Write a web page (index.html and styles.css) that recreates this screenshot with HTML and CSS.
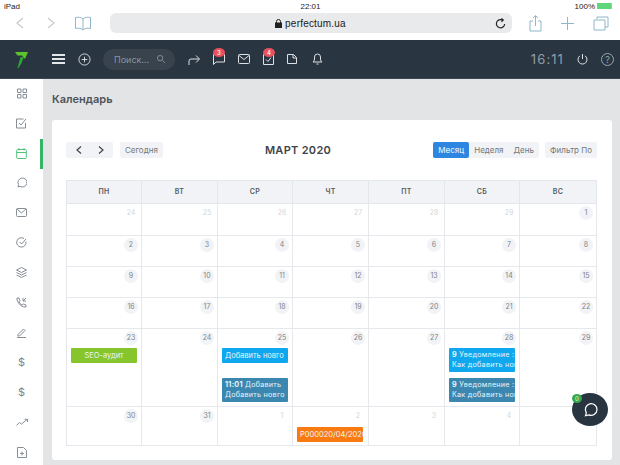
FILE: index.html
```html
<!DOCTYPE html>
<html lang="ru">
<head>
    <meta charset="UTF-8">
    <title>Календарь</title>
    <link rel="stylesheet" href="styles.css">
</head>
<body>
    <div class="status">
        <span>iPad</span>
        <span class="status-time">22:01</span>
        <span class="status-right">100% <i class="battery"></i></span>
    </div>
    <div class="safari">
        <div class="safari-left">
            <svg width="12" height="14" viewBox="0 0 12 14" class="muted"><path d="M9 2 3 7l6 5"/></svg>
            <svg width="12" height="14" viewBox="0 0 12 14" class="muted"><path d="m3 2 6 5-6 5"/></svg>
            <svg width="18" height="15" viewBox="0 0 18 15" class="tint"><path d="M9 3C7 1 4 1 1.500 1.500v11C4 12 7 12 9 14c2-2 5-2 7.500-1.500v-11C14 1 11 1 9 3zv11"/></svg>
        </div>
        <div class="address">
            <span class="address-text"><svg width="7" height="9" viewBox="0 0 7 9" class="lock"><path d="M1.500 4V2.500a2 2 0 0 1 4 0V4"/><rect x="0.500" y="4" width="6" height="4.500"/></svg> perfectum.ua</span>
            <svg width="11" height="11" viewBox="0 0 12 12" class="reload"><path d="M10.500 6.500A4.500 4.500 0 1 1 8 2.200M7 .5l2 1.800L7 4.200"/></svg>
        </div>
        <div class="safari-right">
            <svg width="13" height="17" viewBox="0 0 13 17" class="tint"><path d="M4 6H1v10h11V6H9M6.500 11V1M4 3l2.500-2.500L9 3"/></svg>
            <svg width="15" height="15" viewBox="0 0 15 15" class="tint"><path d="M7.500 1v13M1 7.500h13"/></svg>
            <svg width="16" height="15" viewBox="0 0 16 15" class="tint"><path d="M4 3V1h11v10h-3M1 4h11v10H1z"/></svg>
        </div>
    </div>

    <header class="topbar">
        <svg class="logo" width="14" height="17" viewBox="0 0 14 17"><path d="M1 1h13l-3 7-3-3.500H3.500z" fill="#5cc42b"/><path d="M6.500 6H10l-2.500 6L4.500 17H3.500z" fill="#2fa536"/></svg>
        <div class="burger"><i></i><i></i><i></i></div>
        <svg width="13" height="13" viewBox="0 0 14 14" class="top-icon"><circle cx="7" cy="7" r="6"/><path d="M7 4v6M4 7h6"/></svg>
        <div class="search">
            <span>Поиск...</span>
            <svg width="8" height="8" viewBox="0 0 9 9" class="search-icon"><circle cx="3.500" cy="3.500" r="3"/><path d="m6 6 3 3"/></svg>
        </div>
        <svg width="12" height="11" viewBox="0 0 12 11" class="top-icon"><path d="M1 11V7q0-2 2-2h8M8 1.500 11.500 5 8 8.500"/></svg>
        <div class="notify">
            <svg width="12" height="11" viewBox="0 0 12 11" class="top-icon"><path d="M.5.500h11v7.500H3L.5 10.500z"/></svg>
            <b class="badge">3</b>
        </div>
        <svg width="12" height="10" viewBox="0 0 12 10" class="top-icon"><rect x="0.500" y="0.500" width="11" height="9" rx="1"/><path d="m1 1.500 5 4 5-4"/></svg>
        <div class="notify">
            <svg width="11" height="11" viewBox="0 0 11 11" class="top-icon"><path d="M.5.500h10v10H.5zM3 5.500l2 2 3-4"/></svg>
            <b class="badge">4</b>
        </div>
        <svg width="10" height="10" viewBox="0 0 10 10" class="top-icon file-icon"><path d="M.5.500h6l3 3v6H.5zM6 .5v3.500h3.500"/></svg>
        <svg width="11" height="12" viewBox="0 0 11 12" class="top-icon"><path d="M1 9q1.500-1 1.500-3V4a3 3 0 0 1 6 0v2Q8.500 8 10 9zM4.500 11h2"/></svg>
        <div class="top-right">
            <span class="clock">16:11</span>
            <svg width="11" height="12" viewBox="0 0 11 12" class="top-icon"><path d="M5.500 1v5M3 2.800a4.500 4.500 0 1 0 5 0"/></svg>
            <span class="help">?</span>
        </div>
    </header>

    <div class="app">
        <nav class="sidebar">
            <svg width="10" height="10" viewBox="0 0 10 10"><path d="M.5.500h3.500v3.500H.5zM6 .5h3.500v3.500H6zM.5 6h3.500v3.500H.5zM6 6h3.500v3.500H6z"/></svg>
            <svg width="11" height="11" viewBox="0 0 11 11"><path d="M9.500 5v5H.5V1h7M3 5l2 2 5-6"/></svg>
            <div class="nav-active"><svg width="11" height="11" viewBox="0 0 11 11"><rect x="0.700" y="1.500" width="9.600" height="9" rx="1"/><path d="M.7 4.500h9.600M3 0v2.500M8 0v2.500"/></svg></div>
            <svg width="11" height="11" viewBox="0 0 11 11"><path d="M2 10l.5-2.300A4.500 4.500 0 1 1 4 9.300z"/></svg>
            <svg width="11" height="9" viewBox="0 0 11 9"><rect x="0.500" y="0.500" width="10" height="8" rx="1"/><path d="m1 1 4.500 4L10 1"/></svg>
            <svg width="11" height="11" viewBox="0 0 11 11"><path d="M10 4.500A4.700 4.700 0 1 1 8 1.500M3.500 5l2 2L10 2"/></svg>
            <svg width="11" height="11" viewBox="0 0 11 11"><path d="m5.500.5 5 2.500-5 2.500-5-2.500zM.5 5.500l5 2.500 5-2.500M.5 8l5 2.500L10.500 8"/></svg>
            <svg width="11" height="11" viewBox="0 0 11 11"><path d="M1 1h2l1 2.500L3 5q1 2 3 3l1.500-1L10 8v2Q4 10.500 1 3zM7 1v3h3M7 4l3-3"/></svg>
            <svg width="11" height="11" viewBox="0 0 11 11"><path d="M2 7.500 7.500 2 9 3.500 3.500 9H2zM1 10.500h9"/></svg>
            <span class="nav-dollar">$</span>
            <span class="nav-dollar">$</span>
            <svg width="12" height="8" viewBox="0 0 12 8"><path d="m.5 7 3-3 2 1.500L11 1M8.500.8H11.500V3.500"/></svg>
            <svg width="10" height="11" viewBox="0 0 10 11"><path d="M.5.500h6l3 3v7H.5zM5 4.500v4M3 6.500h4"/></svg>
        </nav>

        <main class="content">
            <h1>Календарь</h1>
            <section class="card">
                <div class="toolbar">
                    <div class="toolbar-left">
                        <div class="btn arrows">
                            <svg width="6" height="8" viewBox="0 0 6 8"><path d="M5 .5 1 4l4 3.500"/></svg>
                            <svg width="6" height="8" viewBox="0 0 6 8"><path d="m1 .5 4 3.500-4 3.500"/></svg>
                        </div>
                        <div class="btn">Сегодня</div>
                    </div>
                    <h2>МАРТ 2020</h2>
                    <div class="toolbar-right">
                        <div class="views">
                            <span class="view-on">Месяц</span>
                            <span>Неделя</span>
                            <span>День</span>
                        </div>
                        <div class="btn">Фильтр По</div>
                    </div>
                </div>

                <div class="calendar">
                    <div class="head">ПН</div><div class="head">ВТ</div><div class="head">СР</div><div class="head">ЧТ</div><div class="head">ПТ</div><div class="head">СБ</div><div class="head">ВС</div>

                    <div class="cell"><span class="day off">24</span></div>
                    <div class="cell"><span class="day off">25</span></div>
                    <div class="cell"><span class="day off">26</span></div>
                    <div class="cell"><span class="day off">27</span></div>
                    <div class="cell"><span class="day off">28</span></div>
                    <div class="cell"><span class="day off">29</span></div>
                    <div class="cell"><span class="day">1</span></div>

                    <div class="cell"><span class="day">2</span></div>
                    <div class="cell"><span class="day">3</span></div>
                    <div class="cell"><span class="day">4</span></div>
                    <div class="cell"><span class="day">5</span></div>
                    <div class="cell"><span class="day">6</span></div>
                    <div class="cell"><span class="day">7</span></div>
                    <div class="cell"><span class="day">8</span></div>

                    <div class="cell"><span class="day">9</span></div>
                    <div class="cell"><span class="day">10</span></div>
                    <div class="cell"><span class="day">11</span></div>
                    <div class="cell"><span class="day">12</span></div>
                    <div class="cell"><span class="day">13</span></div>
                    <div class="cell"><span class="day">14</span></div>
                    <div class="cell"><span class="day">15</span></div>

                    <div class="cell"><span class="day">16</span></div>
                    <div class="cell"><span class="day">17</span></div>
                    <div class="cell"><span class="day">18</span></div>
                    <div class="cell"><span class="day">19</span></div>
                    <div class="cell"><span class="day">20</span></div>
                    <div class="cell"><span class="day">21</span></div>
                    <div class="cell"><span class="day">22</span></div>

                    <div class="cell"><span class="day">23</span><div class="event green">SEO-аудит</div></div>
                    <div class="cell"><span class="day">24</span></div>
                    <div class="cell">
                        <span class="day">25</span>
                        <div class="event blue left">Добавить новго</div>
                        <div class="event teal two low"><b>11:01</b> Добавить<br>Добавить новго</div>
                    </div>
                    <div class="cell"><span class="day">26</span></div>
                    <div class="cell"><span class="day">27</span></div>
                    <div class="cell">
                        <span class="day">28</span>
                        <div class="event blue two"><b>9</b> Уведомление :<br>Как добавить новго</div>
                        <div class="event teal two"><b>9</b> Уведомление :<br>Как добавить новго</div>
                    </div>
                    <div class="cell"><span class="day">29</span></div>

                    <div class="cell"><span class="day">30</span></div>
                    <div class="cell"><span class="day">31</span></div>
                    <div class="cell"><span class="day off">1</span></div>
                    <div class="cell"><span class="day off">2</span><div class="event orange left">P000020/04/2020</div></div>
                    <div class="cell"><span class="day off">3</span></div>
                    <div class="cell"><span class="day off">4</span></div>
                    <div class="cell"></div>
                </div>
            </section>
        </main>
    </div>

    <div class="chat">
        <b class="chat-count">0</b>
        <svg width="15" height="15" viewBox="0 0 18 18"><path d="M3 16.500l1-3.500A7 7 0 1 1 7 15.500z"/></svg>
    </div>
</body>
</html>
```

FILE: styles.css
```css
* {
    box-sizing: border-box;
}
html, body {
    margin: 0;
    width: 620px;
    height: 465px;
    overflow: hidden;
}
body {
    font-family: Inter, "Open Sans", sans-serif;
    color: #555;
    background: #e3e4e6;
}
svg {
    fill: none;
    stroke-width: 1;
    display: block;
    flex: none;
}

/* ipad + safari */
.status {
    height: 12px;
    padding: 0 3px 0 4px;
    background: #fff;
    display: grid;
    grid-template-columns: 1fr auto 1fr;
    align-items: center;
    font: 8px "Liberation Sans", sans-serif;
    color: #222;
}
.status-right {
    display: flex;
    justify-content: flex-end;
    align-items: center;
    gap: 2px;
    padding-right: 5px;
}
.battery {
    width: 15px;
    height: 6px;
    background: #5fd67a;
    border-right: 1px solid #bbb;
}
.safari {
    height: 28px;
    background: #fff;
    display: flex;
    align-items: flex-start;
    padding-top: 1px;
}
.safari-left {
    width: 110px;
    height: 20px;
    padding-left: 14px;
    display: flex;
    align-items: center;
    gap: 19px;
}
.safari-left svg:last-child {
    margin-left: -2px;
}
.muted {
    stroke: #c9c9cc;
    stroke-width: 1.2;
}
.tint {
    stroke: #8fb6c9;
}
.address {
    width: 402px;
    height: 20px;
    border-radius: 6px;
    background: #e9eaec;
    display: flex;
    align-items: center;
    position: relative;
    justify-content: center;
    font: 10px "Liberation Sans", sans-serif;
    color: #222;
    letter-spacing: .2px;
    padding-right: 20px;
}
.address-text {
    display: flex;
    align-items: center;
    gap: 3px;
    margin-left: 19px;
}
.lock {
    stroke: #222;
}
.lock rect {
    fill: #222;
}
.reload {
    stroke: #222;
    stroke-width: 1.300;
    position: absolute;
    right: 6px;
    top: 5px;
}
.safari-right {
    flex: 1;
    height: 20px;
    display: flex;
    align-items: center;
    padding-left: 17px;
    gap: 18px;
}

/* top bar */
.topbar {
    height: 39px;
    background: #293540;
    border-bottom: 1px solid #3b4752;
    display: flex;
    align-items: center;
    gap: 13px;
    padding: 0 6px 0 14px;
}
.logo {
    margin-right: 11px;
}
.burger {
    width: 13px;
    display: flex;
    flex-direction: column;
    gap: 2px;
}
.burger i {
    height: 2px;
    background: #e4e7ea;
}
.top-icon {
    stroke: #dde1e5;
}
.file-icon {
    margin-right: 2px;
}
.search {
    width: 72px;
    height: 21px;
    border-radius: 11px;
    background: #38434e;
    margin-left: -1px;
    display: flex;
    align-items: center;
    justify-content: space-between;
    padding: 0 10px 0 11px;
    font-size: 9px;
    color: #8b95a0;
}
.search-icon {
    stroke: #8b95a0;
}
.notify {
    position: relative;
}
.badge {
    position: absolute;
    left: 0;
    top: -6px;
    width: 12px;
    height: 9px;
    border-radius: 50%;
    background: #e9505f;
    color: #fff;
    font-size: 6px;
    font-weight: 500;
    line-height: 9px;
    text-align: center;
}
.top-right {
    margin-left: auto;
    display: flex;
    align-items: center;
    gap: 13px;
}
.clock {
    font-size: 13px;
    letter-spacing: 1.100px;
    color: #939ea8;
}
.help {
    width: 13px;
    height: 13px;
    border: 1px solid #9aa5af;
    border-radius: 50%;
    font-size: 9px;
    line-height: 11px;
    text-align: center;
    color: #9aa5af;
}

/* layout */
.app {
    display: flex;
    height: 386px;
}
.sidebar {
    width: 43px;
    background: #fff;
    display: flex;
    flex-direction: column;
    align-items: center;
    padding-top: 9px;
    flex: none;
}
.sidebar svg {
    stroke: #868e96;
    margin: 0 auto;
}
.sidebar > * {
    flex: none;
}
.sidebar > svg {
    height: 11px;
    margin-bottom: 19px;
}
.nav-active {
    width: 100%;
    height: 30px;
    margin: -9px 0 8px;
    padding-top: 9px;
    border-right: 3px solid #36b568;
}
.sidebar .nav-active svg {
    stroke: #55c27c;
    position: relative;
    left: 1px;
}
.nav-dollar {
    font-size: 11px;
    line-height: 11px;
    height: 30px;
    color: #7a838c;
}
.content {
    flex: 1;
    padding: 14px 9px 5px 9px;
}
h1 {
    margin: 0 0 14px;
    font-size: 11px;
    line-height: 13px;
    font-weight: 600;
    color: #4e5358;
}
.card {
    height: 340px;
    background: #fff;
    border-radius: 3px;
    padding: 0 15px 0 14px;
}

/* toolbar */
.toolbar {
    height: 60px;
    padding-top: 22px;
    display: flex;
    justify-content: space-between;
    align-items: flex-start;
}
.toolbar-left, .toolbar-right {
    display: flex;
    gap: 7px;
}
.toolbar-right {
    gap: 6px;
}
.btn {
    height: 16px;
    background: #f1f3f6;
    border-radius: 2px;
    padding: 0 5px;
    font-size: 8px;
    line-height: 16px;
    color: #777;
}
.arrows {
    width: 47px;
    display: flex;
    align-items: center;
    gap: 16px;
    padding: 0 9px 0 10px;
}
.arrows svg {
    stroke: #444;
    stroke-width: 1.200;
}
h2 {
    margin: -1px 0 0;
    font-size: 11px;
    line-height: 18px;
    font-weight: 600;
    color: #3f444a;
    letter-spacing: .3px;
}
.views {
    display: flex;
    height: 16px;
    background: #f1f3f6;
    border-radius: 2px;
    font-size: 8px;
    line-height: 16px;
    color: #777;
}
.views span {
    padding: 0 5px;
}
.views .view-on {
    background: #2f86e0;
    color: #dfeaf7;
    border-radius: 2px;
    font-weight: 500;
}

/* calendar grid */
.calendar {
    display: grid;
    grid-template-columns: 75px 76px 75px 76px 76px 75px 77px;
    grid-template-rows: 24px 32px 31px 31px 31px 78px 39px;
    width: 531px;
    border-left: 1px solid #e3e6ea;
}
.head {
    background: #f1f3f6;
    border: 1px solid #e3e6ea;
    border-left: 0;
    font-size: 7px;
    font-weight: 600;
    line-height: 22px;
    text-align: center;
    color: #555b61;
    letter-spacing: .3px;
}
.cell {
    border-right: 1px solid #e6e8eb;
    border-bottom: 1px solid #e6e8eb;
    padding: 2px 3px 0 4px;
    min-width: 0;
    overflow: hidden;
}
.day {
    display: block;
    width: 14px;
    height: 14px;
    margin-left: auto;
    border-radius: 50%;
    background: #f1f3f6;
    font-size: 7px;
    line-height: 14px;
    text-align: center;
    color: #808488;
}
.day.off {
    background: none;
    color: #d3d6da;
}
.event {
    height: 15px;
    margin-top: 3px;
    margin-bottom: 6px;
    border-radius: 1px;
    color: #e8f5fb;
    font-size: 7.500px;
    line-height: 15px;
    text-align: center;
    white-space: nowrap;
    overflow: hidden;
    padding: 0 3px;
    width: 66px;
}
.event + .event {
    margin-top: 0;
}
.event b {
    font-weight: 700;
}
.left {
    text-align: left;
}
.two {
    height: 24px;
    line-height: 10px;
    padding: 2px 3px;
    text-align: left;
    font-size: 7.200px;
    letter-spacing: .25px;
}
.low {
    margin-top: 15px !important;
}
.green {
    background: #86c52c;
}
.blue {
    background: #0fa7ee;
}
.teal {
    background: #3b87b0;
}
.orange {
    background: #f97a10;
    margin-top: 4px;
    padding: 0 1px 0 3px;
}

/* floating chat */
.chat {
    position: absolute;
    left: 572px;
    top: 393px;
    width: 36px;
    height: 33px;
    border-radius: 50%;
    background: #283541;
    display: flex;
    align-items: center;
    justify-content: center;
}
.chat svg {
    stroke: #fff;
    stroke-width: 1.500;
}
.chat-count {
    position: absolute;
    left: 0;
    top: 1px;
    width: 10px;
    height: 9px;
    border-radius: 50%;
    background: #36a74e;
    color: #d7f3dd;
    font-size: 6px;
    font-weight: 500;
    line-height: 9px;
    text-align: center;
}
```
